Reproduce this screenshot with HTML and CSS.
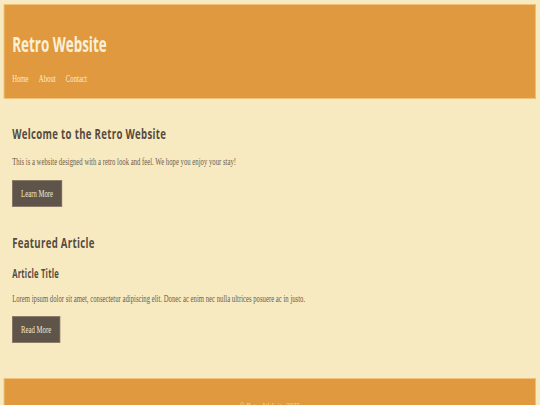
FILE: index.html
```html
<!DOCTYPE html>
<html lang="en">
<head>
<meta charset="utf-8">
<title>Retro Website</title>
<link rel="stylesheet" href="styles.css">
</head>
<body>
<div class="frame">
<div class="page">
  <header class="site-header">
    <h1 class="site-title">Retro Website</h1>
    <nav class="site-nav">
      <a href="#">Home</a>
      <a href="#">About</a>
      <a href="#">Contact</a>
    </nav>
  </header>
  <main class="content">
    <section class="block intro">
      <h2 class="heading">Welcome to the Retro Website</h2>
      <p class="text">This is a website designed with a retro look and feel. We hope you enjoy your stay!</p>
      <a class="btn" href="#">Learn More</a>
    </section>
    <section class="block featured">
      <h2 class="heading">Featured Article</h2>
      <h3 class="subheading">Article Title</h3>
      <p class="text text-article">Lorem ipsum dolor sit amet, consectetur adipiscing elit. Donec ac enim nec nulla ultrices posuere ac in justo.</p>
      <a class="btn" href="#">Read More</a>
    </section>
  </main>
  <footer class="site-footer">
    <p class="footer-text">&copy; Retro Website 2023</p>
  </footer>
</div>
</div>
</body>
</html>
```

FILE: styles.css
```css
html, body {
  margin: 0;
  padding: 0;
  background: #f7eac1;
  overflow: hidden;
}

.frame {
  width: 540px;
  height: 405px;
  overflow: hidden;
}

.page {
  width: 843px;
  min-height: 405px;
  box-sizing: border-box;
  padding: 4px 6px 0;
  transform: scaleX(0.64);
  transform-origin: 0 0;
  font-family: "Liberation Serif", "Times New Roman", serif;
  color: #6b5c4c;
}

.site-header {
  background: #e0993e;
  border: 1px solid #f1c27c;
  padding: 27px 12px 13px;
}

.site-title {
  margin: 0;
  font-family: "Comic Sans MS", "Open Sans", sans-serif;
  font-weight: 700;
  font-size: 21px;
  line-height: 24px;
  color: #fbf0d6;
}

.site-nav {
  display: flex;
  gap: 16px;
  margin-top: 17px;
}

.site-nav a {
  font-size: 10.5px;
  line-height: 12px;
  color: #f9ead0;
  text-decoration: none;
}

.content {
  padding: 25px 13px 0;
}

.block {
  display: flex;
  flex-direction: column;
  align-items: flex-start;
}

.featured {
  margin-top: 26px;
}

.heading {
  margin: 0;
  font-family: "Comic Sans MS", "Open Sans", sans-serif;
  font-weight: 700;
  font-size: 15px;
  line-height: 18px;
  letter-spacing: 0.5px;
  color: #554a40;
}

.subheading {
  margin: 15px 0 0;
  font-family: "Comic Sans MS", "Open Sans", sans-serif;
  font-weight: 700;
  font-size: 12px;
  line-height: 15px;
  letter-spacing: 0.3px;
  color: #554a40;
}

.text {
  margin: 14px 0 12px;
  font-size: 10.5px;
  line-height: 12px;
  color: #6b5c4c;
}

.text-article {
  margin: 12px 0 11px;
}

.btn {
  display: inline-block;
  background: #5f544a;
  border: 1px solid #8c7c6a;
  color: #f5e8cc;
  font-size: 10.5px;
  line-height: 12px;
  padding: 6.5px 13px;
  text-decoration: none;
}

.site-footer {
  margin-top: 35px;
  background: #e0993e;
  border: 1px solid #f1c27c;
  padding: 22px 12px 20px;
}

.footer-text {
  margin: 0;
  text-align: center;
  font-size: 10.5px;
  line-height: 12px;
  color: #f5dca8;
}
```
